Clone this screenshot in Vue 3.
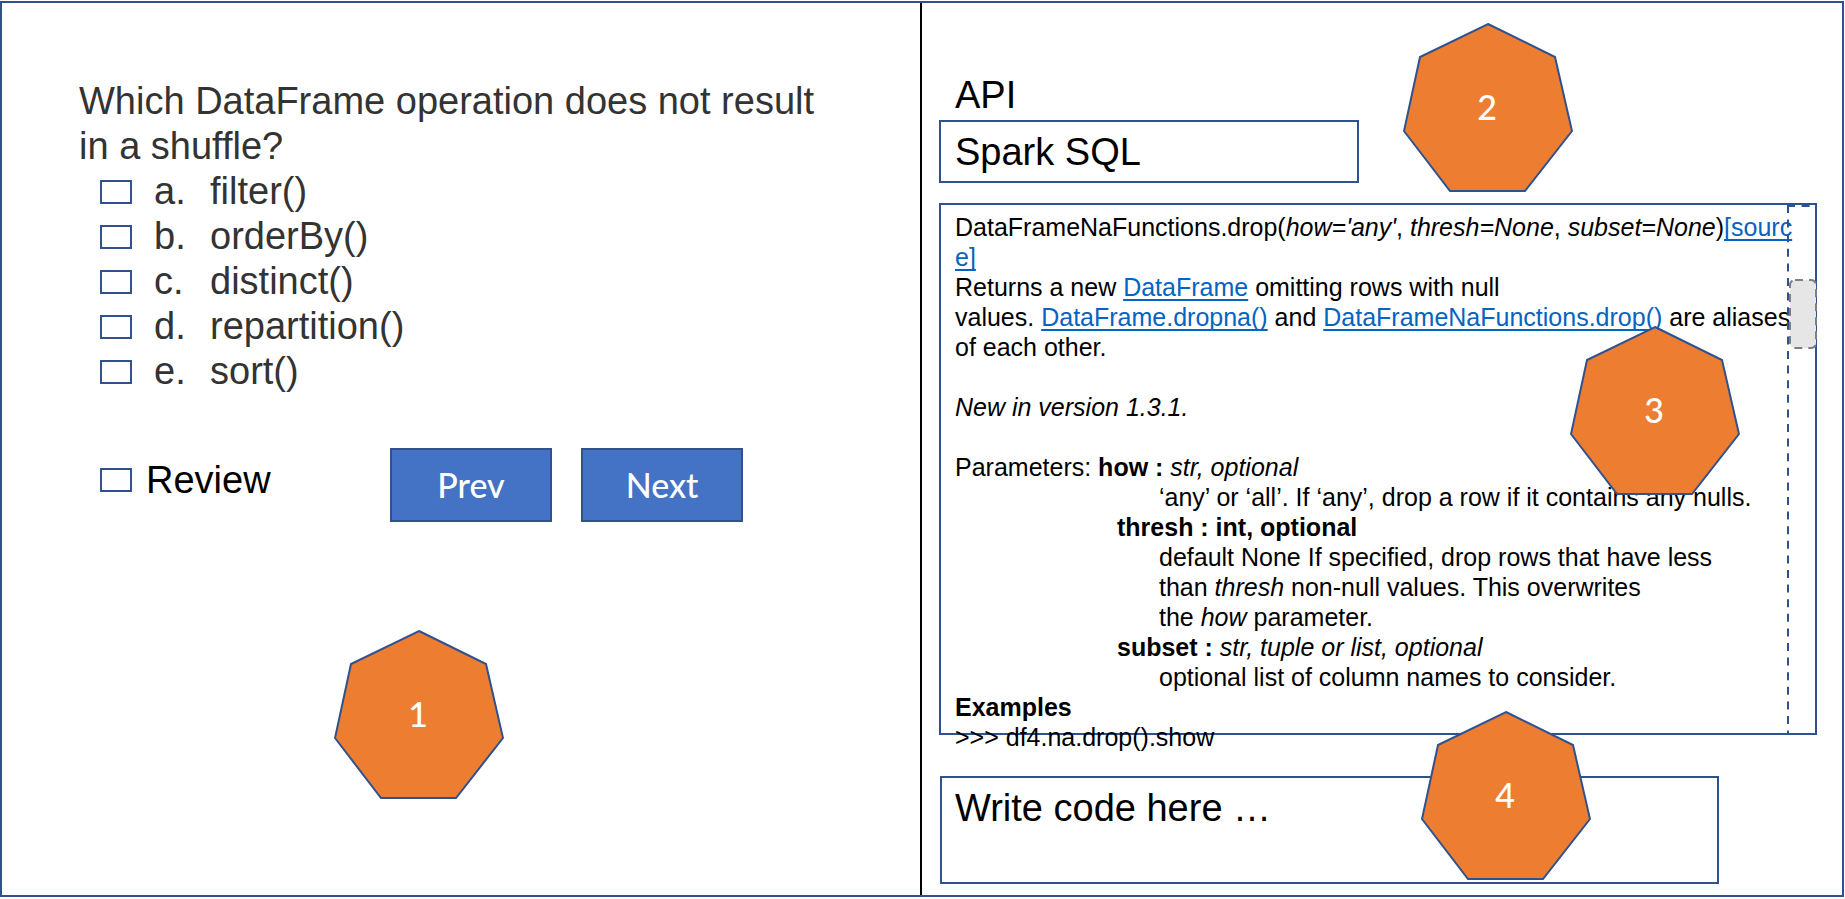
<script setup>
import { ref } from 'vue'

const options = [
  { letter: 'a.', label: 'filter()' },
  { letter: 'b.', label: 'orderBy()' },
  { letter: 'c.', label: 'distinct()' },
  { letter: 'd.', label: 'repartition()' },
  { letter: 'e.', label: 'sort()' },
]
const picked = ref([])
const review = ref(false)
const api = ref('Spark SQL')
const code = ref('')
const heptagon = '85,2 152,35 169,109 122,169 47,169 1,109 17,35'
</script>

<template>
  <main class="frame">
    <section class="panel quiz">
      <fieldset class="question">
        <legend>Which DataFrame operation does not result in a shuffle?</legend>
        <label v-for="o in options" :key="o.letter" class="option">
          <input v-model="picked" type="checkbox" :value="o.letter" class="box" />
          <span class="letter">{{ o.letter }}</span>
          <span>{{ o.label }}</span>
        </label>
      </fieldset>

      <div class="actions">
        <label class="review">
          <input v-model="review" type="checkbox" class="box" />
          <span>Review</span>
        </label>
        <button type="button" class="nav">Prev</button>
        <button type="button" class="nav">Next</button>
      </div>

      <div class="marker marker-1">
        <svg viewBox="0 0 170 171"><polygon :points="heptagon" /></svg>
        <span>1</span>
      </div>
    </section>

    <section class="panel reference">
      <div class="picker">
        <label for="api" class="api-label">API</label>
        <select id="api" v-model="api" class="api">
          <option>Spark SQL</option>
        </select>
        <div class="marker marker-2">
          <svg viewBox="0 0 170 171"><polygon :points="heptagon" /></svg>
          <span>2</span>
        </div>
      </div>

      <article class="doc">
        <p>DataFrameNaFunctions.drop(<i>how='any'</i>, <i>thresh=None</i>, <i>subset=None</i>)<a href="#source">[sourc<br />e]</a></p>
        <p>
          Returns a new <a href="#dataframe">DataFrame</a> omitting rows with null<br />
          values. <a href="#dropna">DataFrame.dropna()</a> and <a href="#drop">DataFrameNaFunctions.drop()</a> are aliases<br />
          of each other.
        </p>
        <p class="version"><i>New in version 1.3.1.</i></p>
        <p>Parameters: <b>how :</b> <i>str, optional</i></p>
        <p class="detail">‘any’ or ‘all’. If ‘any’, drop a row if it contains any nulls.</p>
        <p class="param"><b>thresh : int, optional</b></p>
        <p class="detail">
          default None If specified, drop rows that have less<br />
          than <i>thresh</i> non-null values. This overwrites<br />
          the <i>how</i> parameter.
        </p>
        <p class="param"><b>subset :</b> <i>str, tuple or list, optional</i></p>
        <p class="detail">optional list of column names to consider.</p>
        <p><b>Examples</b></p>
        <p>&gt;&gt;&gt; df4.na.drop().show</p>

        <div class="track">
          <svg class="rail">
            <line x1="2" y1="0" x2="2" y2="100%" />
            <line x1="1" y1="1" x2="100%" y2="1" />
          </svg>
          <svg class="thumb"><rect x="1" y="1" width="26" height="68" rx="5" /></svg>
        </div>
        <div class="marker marker-3">
          <svg viewBox="0 0 170 171"><polygon :points="heptagon" /></svg>
          <span>3</span>
        </div>
      </article>

      <div class="editor">
        <textarea v-model="code" aria-label="Code" placeholder="Write code here …"></textarea>
        <div class="marker marker-4">
          <svg viewBox="0 0 170 171"><polygon :points="heptagon" /></svg>
          <span>4</span>
        </div>
      </div>
    </section>
  </main>
</template>

<style>
body {
  margin: 0;
  background: #fff;
}
</style>

<style scoped>
* {
  box-sizing: border-box;
}
.frame {
  display: grid;
  grid-template-columns: minmax(0, 1fr) minmax(0, 1fr);
  min-height: calc(100vh - 3px);
  margin: 1px 1px 2px 0;
  border: 2px solid #2f528f;
  font-family: "Liberation Sans", Arial, sans-serif;
  font-size: 38px;
  line-height: 45px;
  color: #000;
}
.quiz {
  padding: 76px 100px 0 77px;
  border-right: 2px solid #000;
}
.question {
  margin: 0;
  padding: 0;
  border: 0;
  color: #333;
}
.question legend {
  padding: 0;
}
.option {
  display: flex;
  align-items: center;
  padding-left: 21px;
}
.letter {
  width: 56px;
}
.box {
  appearance: none;
  flex: none;
  width: 32px;
  height: 24px;
  margin: 0 22px 0 0;
  border: 2px solid #2f528f;
  background: #fff;
}
.box:checked {
  background: #4472c4;
}
.actions {
  display: flex;
  align-items: center;
  gap: 29px;
  margin-top: 54px;
  padding-left: 21px;
}
.review {
  display: flex;
  align-items: center;
  width: 261px;
  margin-bottom: 10px;
}
.review .box {
  margin-right: 14px;
}
.nav {
  width: 162px;
  height: 74px;
  padding: 0;
  border: 2px solid #2f528f;
  background: #4472c4;
  color: #fff;
  font: 500 34px/40px Lato, sans-serif;
}
.reference {
  padding: 70px 25px 0 17px;
}
.picker,
.doc,
.editor {
  position: relative;
}
.api-label {
  display: block;
  padding-left: 16px;
}
.api {
  appearance: none;
  display: block;
  width: 420px;
  height: 63px;
  margin-top: 2px;
  padding: 2px 14px 0;
  border: 2px solid #2f528f;
  border-radius: 0;
  background: #fff;
  color: #000;
  font: inherit;
}
.doc {
  height: 532px;
  margin-top: 20px;
  padding: 7px 14px;
  border: 2px solid #2f528f;
  font-size: 25px;
  line-height: 30px;
  white-space: nowrap;
}
.doc p {
  margin: 0;
}
.doc a {
  color: #0563c1;
  text-decoration-thickness: 2px;
  text-underline-offset: 3px;
  text-decoration-skip-ink: none;
}
.doc .version {
  margin: 30px 0;
}
.doc .param {
  padding-left: 162px;
}
.doc .detail {
  padding-left: 204px;
}
.track {
  position: absolute;
  top: 0;
  right: 0;
  bottom: 0;
  width: 29px;
}
.rail {
  display: block;
  width: 100%;
  height: 100%;
}
.rail line {
  stroke: #2f528f;
  stroke-width: 2;
  stroke-dasharray: 8 6.6;
}
.thumb {
  position: absolute;
  top: 74px;
  right: -2px;
  width: 28px;
  height: 70px;
}
.thumb rect {
  fill: #e7e6e6;
  stroke: #7f7f7f;
  stroke-width: 2;
  stroke-dasharray: 8 6;
}
.editor {
  margin: 41px 98px 0 1px;
}
.editor textarea {
  display: block;
  width: 100%;
  height: 108px;
  padding: 8px 13px;
  border: 2px solid #2f528f;
  background: #fff;
  color: #000;
  font: inherit;
  resize: none;
}
.editor textarea::placeholder {
  color: #000;
  opacity: 1;
}
.marker {
  display: grid;
  place-items: center;
  width: 170px;
  height: 171px;
  color: #fff;
  font: 500 34px/40px Lato, sans-serif;
}
.marker > * {
  grid-area: 1 / 1;
}
.marker span {
  padding: 0 2px 2px 0;
}
.marker svg {
  width: 170px;
  height: 171px;
}
.marker polygon {
  fill: #ed7d31;
  stroke: #2f528f;
  stroke-width: 2;
}
.marker-1 {
  margin: 107px 0 0 255px;
}
.marker-2,
.marker-3,
.marker-4 {
  position: absolute;
}
.marker-2 {
  top: -51px;
  left: 464px;
}
.marker-3 {
  top: 120px;
  right: 75px;
}
.marker-4 {
  top: -66px;
  right: 128px;
}
</style>
